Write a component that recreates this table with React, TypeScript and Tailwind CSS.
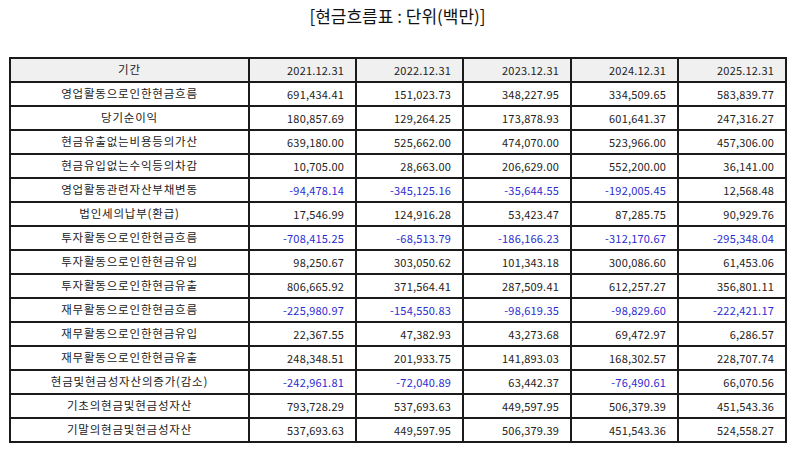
import React from "react";

const cols = ["2021.12.31", "2022.12.31", "2023.12.31", "2024.12.31", "2025.12.31"];

const rows: [string, string[]][] = [
  ["영업활동으로인한현금흐름", ["691,434.41", "151,023.73", "348,227.95", "334,509.65", "583,839.77"]],
  ["당기순이익", ["180,857.69", "129,264.25", "173,878.93", "601,641.37", "247,316.27"]],
  ["현금유출없는비용등의가산", ["639,180.00", "525,662.00", "474,070.00", "523,966.00", "457,306.00"]],
  ["현금유입없는수익등의차감", ["10,705.00", "28,663.00", "206,629.00", "552,200.00", "36,141.00"]],
  ["영업활동관련자산부채변동", ["-94,478.14", "-345,125.16", "-35,644.55", "-192,005.45", "12,568.48"]],
  ["법인세의납부(환급)", ["17,546.99", "124,916.28", "53,423.47", "87,285.75", "90,929.76"]],
  ["투자활동으로인한현금흐름", ["-708,415.25", "-68,513.79", "-186,166.23", "-312,170.67", "-295,348.04"]],
  ["투자활동으로인한현금유입", ["98,250.67", "303,050.62", "101,343.18", "300,086.60", "61,453.06"]],
  ["투자활동으로인한현금유출", ["806,665.92", "371,564.41", "287,509.41", "612,257.27", "356,801.11"]],
  ["재무활동으로인한현금흐름", ["-225,980.97", "-154,550.83", "-98,619.35", "-98,829.60", "-222,421.17"]],
  ["재무활동으로인한현금유입", ["22,367.55", "47,382.93", "43,273.68", "69,472.97", "6,286.57"]],
  ["재무활동으로인한현금유출", ["248,348.51", "201,933.75", "141,893.03", "168,302.57", "228,707.74"]],
  ["현금및현금성자산의증가(감소)", ["-242,961.81", "-72,040.89", "63,442.37", "-76,490.61", "66,070.56"]],
  ["기초의현금및현금성자산", ["793,728.29", "537,693.63", "449,597.95", "506,379.39", "451,543.36"]],
  ["기말의현금및현금성자산", ["537,693.63", "449,597.95", "506,379.39", "451,543.36", "524,558.27"]],
];

export default function App() {
  return (
    <div
      className="w-[795px] h-[452px] bg-white text-[#222]"
      style={{ fontFamily: '"Noto Sans CJK KR", "Noto Sans", sans-serif' }}
    >
      <div className="pt-[4px] h-[57px] text-center text-[17px] leading-[24px] text-[#111]">
        [현금흐름표 : 단위(백만)]
      </div>
      <table className="ml-[9px] w-[778px] border-collapse table-fixed text-[11px] leading-none tracking-[0.2px]">
        <colgroup>
          <col className="w-[239px]" />
          <col className="w-[107px]" />
          <col className="w-[107px]" />
          <col className="w-[108px]" />
          <col className="w-[107px]" />
          <col className="w-[108px]" />
        </colgroup>
        <thead>
          <tr className="h-[24px] bg-[#f0f0f0]">
            <th className="border-2 border-[#1a1a1a] font-normal text-center text-[11.5px] tracking-[0.8px]">기간</th>
            {cols.map((c) => (
              <th key={c} className="border-2 border-[#1a1a1a] font-normal text-right pr-[11px]">
                {c}
              </th>
            ))}
          </tr>
        </thead>
        <tbody>
          {rows.map(([label, vals]) => (
            <tr key={label} className="h-[24px]">
              <td className="border-2 border-[#1a1a1a] text-center text-[11.5px] tracking-[0.8px]">{label}</td>
              {vals.map((v, i) => (
                <td
                  key={i}
                  className={
                    v.startsWith("-")
                      ? "border-2 border-[#1a1a1a] text-right pr-[11px] text-[#2b2bd0]"
                      : "border-2 border-[#1a1a1a] text-right pr-[11px]"
                  }
                >
                  {v}
                </td>
              ))}
            </tr>
          ))}
        </tbody>
      </table>
    </div>
  );
}
